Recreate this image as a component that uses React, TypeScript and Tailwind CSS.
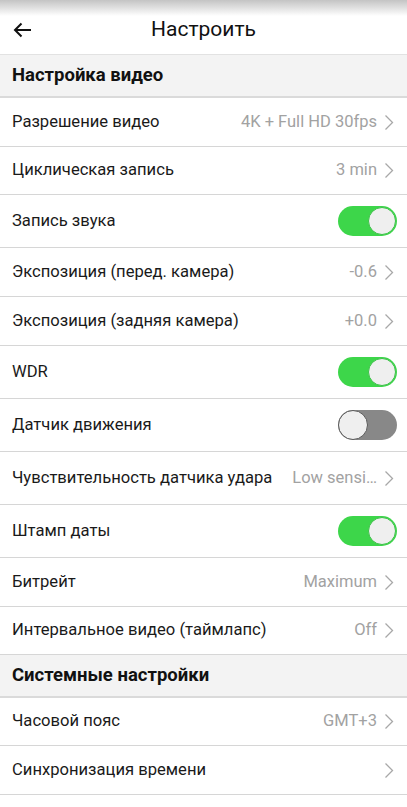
import React from "react";

type Item =
  | { kind: "section"; title: string }
  | { kind: "value"; label: string; value?: string; h: string }
  | { kind: "toggle"; label: string; on: boolean; h: string };

const items: Item[] = [
  { kind: "section", title: "Настройка видео" },
  { kind: "value", label: "Разрешение видео", value: "4K + Full HD 30fps", h: "h-[49px]" },
  { kind: "value", label: "Циклическая запись", value: "3 min", h: "h-[48px]" },
  { kind: "toggle", label: "Запись звука", on: true, h: "h-[53px]" },
  { kind: "value", label: "Экспозиция (перед. камера)", value: "-0.6", h: "h-[49px]" },
  { kind: "value", label: "Экспозиция (задняя камера)", value: "+0.0", h: "h-[49px]" },
  { kind: "toggle", label: "WDR", on: true, h: "h-[53px]" },
  { kind: "toggle", label: "Датчик движения", on: false, h: "h-[53px]" },
  { kind: "value", label: "Чувствительность датчика удара", value: "Low sensi…", h: "h-[53px]" },
  { kind: "toggle", label: "Штамп даты", on: true, h: "h-[53px]" },
  { kind: "value", label: "Битрейт", value: "Maximum", h: "h-[49px]" },
  { kind: "value", label: "Интервальное видео (таймлапс)", value: "Off", h: "h-[48px]" },
  { kind: "section", title: "Системные настройки" },
  { kind: "value", label: "Часовой пояс", value: "GMT+3", h: "h-[48px]" },
  { kind: "value", label: "Синхронизация времени", h: "h-[49px]" },
  { kind: "value", label: "", h: "h-[49px]" },
];

function Chevron() {
  return (
    <svg width="10" height="17" viewBox="0 0 10 17" className="mr-[3px] shrink-0">
      <path d="M1.5 1.5 L8.5 8.5 L1.5 15.5" fill="none" stroke="#a8a8a8" strokeWidth="1.3" />
    </svg>
  );
}

function Toggle({ on }: { on: boolean }) {
  if (on) {
    return (
      <div className="relative h-[30px] w-[59px] rounded-full bg-[#3dd64a]">
        <div className="absolute right-[1px] top-[1px] h-[28px] w-[28px] rounded-full border border-[#3cc048] bg-[#efefef]" />
      </div>
    );
  }
  return (
    <div className="relative h-[30px] w-[59px] rounded-full bg-[#888888]">
      <div className="absolute left-0 top-0 h-[30px] w-[30px] rounded-full border-[1.5px] border-[#5a5a5a] bg-[#efefef]" />
    </div>
  );
}

export default function App() {
  return (
    <div
      className="h-[807px] w-[407px] overflow-hidden bg-white text-[#1a1a1a]"
      style={{ fontFamily: "Roboto, 'Noto Sans', sans-serif" }}
    >
      <div className="relative flex h-[55px] items-center border-b border-[#e2e2e2] bg-white pt-[5px]">
        <div className="absolute inset-x-0 top-0 h-[16px] bg-gradient-to-b from-[#c4c4c4] to-white" />
        <div className="relative ml-[13px] flex h-[30px] w-[22px] items-center">
          <svg width="19" height="16" viewBox="0 0 19 16">
            <path d="M18 8 H2 M8.5 1.5 L2 8 L8.5 14.5" fill="none" stroke="#111" strokeWidth="2" />
          </svg>
        </div>
        <div className="relative flex-1 pr-[35px] text-center text-[21px] text-[#111]">Настроить</div>
      </div>

      {items.map((it, i) => {
        if (it.kind === "section") {
          return (
            <div
              key={i}
              className="flex h-[43px] items-center border-b-2 border-[#dadada] bg-[#f3f3f3] px-[12px] text-[18.5px] font-bold text-[#111]"
            >
              {it.title}
            </div>
          );
        }
        return (
          <div
            key={i}
            className={`flex ${it.h} items-center border-b-[1.5px] border-[#d6d6d6] pl-[12px] pr-[10px]`}
          >
            <div className="flex-1 whitespace-nowrap text-[16.6px]">{it.label}</div>
            {it.kind === "toggle" ? (
              <Toggle on={it.on} />
            ) : it.label ? (
              <div className="flex items-center gap-[7px]">
                {it.value && <span className="whitespace-nowrap text-[16.5px] text-[#a2a2a2]">{it.value}</span>}
                <Chevron />
              </div>
            ) : null}
          </div>
        );
      })}
    </div>
  );
}
